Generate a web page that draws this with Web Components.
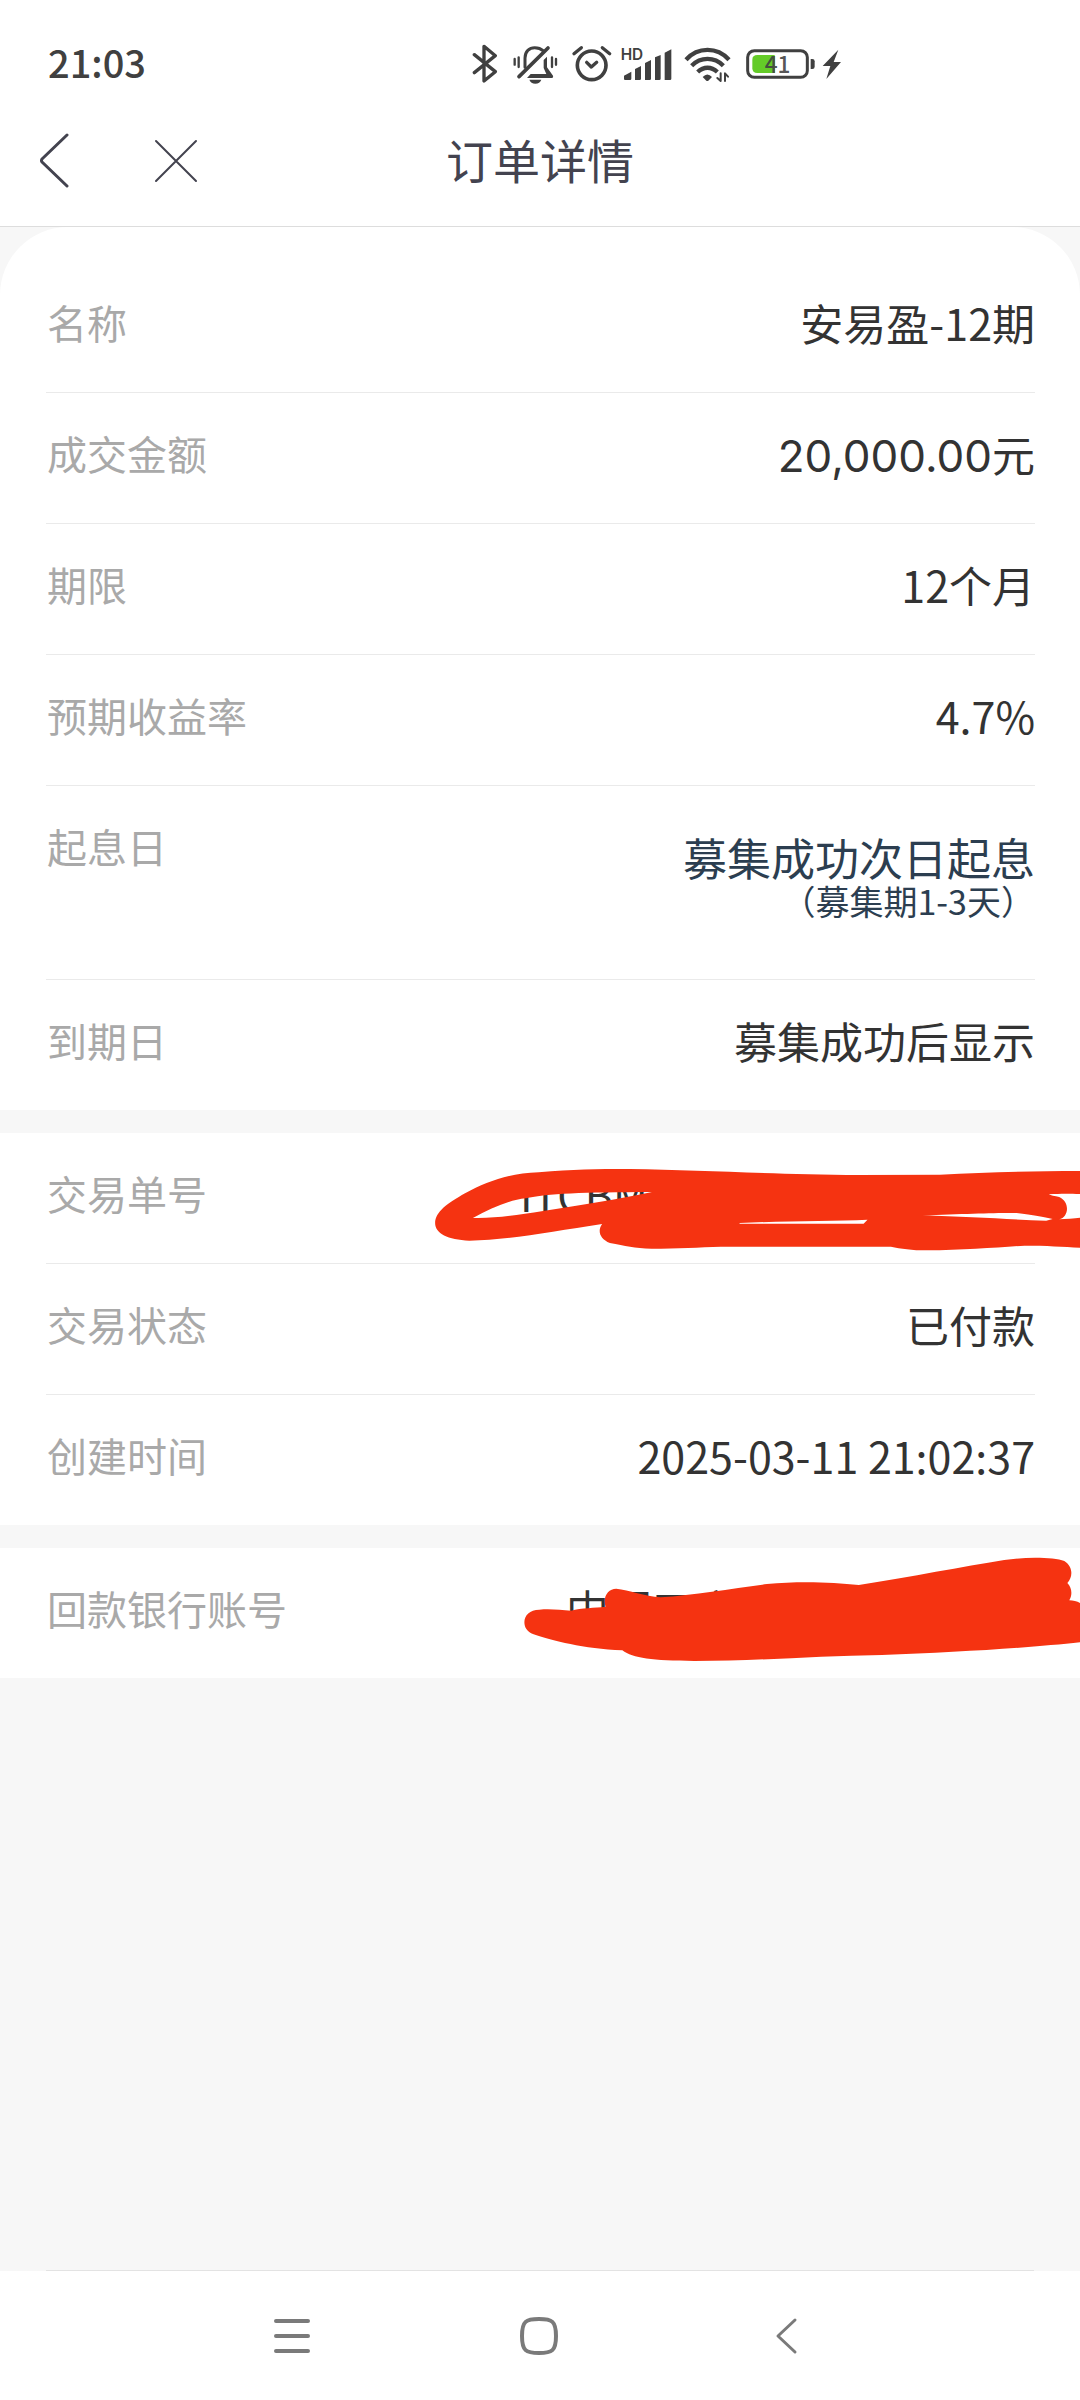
<!DOCTYPE html>
<html lang="zh-CN">
<head>
<meta charset="utf-8">
<meta name="viewport" content="width=device-width, initial-scale=1">
<title>订单详情</title>
<style>
body { margin: 0; font-family: "Noto Sans CJK SC", sans-serif; color: #333; background: #f7f7f7; }
</style>
</head>
<body>
<order-page>
  <status-bar slot="top">21:03</status-bar>
  <app-bar slot="top">订单详情</app-bar>

  <detail-card rounded>
    <detail-row label="名称">安易盈-12期</detail-row>
    <detail-row label="成交金额"><money-value>20,000.00</money-value>元</detail-row>
    <detail-row label="期限">12个月</detail-row>
    <detail-row label="预期收益率">4.7%</detail-row>
    <detail-row label="起息日"><value-note>募集成功次日起息<span slot="note">（募集期1-3天）</span></value-note></detail-row>
    <detail-row label="到期日" last>募集成功后显示</detail-row>
  </detail-card>

  <detail-card>
    <detail-row label="交易单号"><masked-value kind="order">ITCBM</masked-value></detail-row>
    <detail-row label="交易状态">已付款</detail-row>
    <detail-row label="创建时间" last>2025-03-11 21:02:37</detail-row>
  </detail-card>

  <detail-card>
    <detail-row label="回款银行账号" last><masked-value kind="bank">中国工商</masked-value></detail-row>
  </detail-card>

  <nav-bar slot="bottom"></nav-bar>
</order-page>

<script>
const define = (name, html, setup) => {
  const template = document.createElement('template');
  template.innerHTML = html;
  customElements.define(name, class extends HTMLElement {
    constructor() {
      super();
      this.attachShadow({ mode: 'open' }).append(template.content.cloneNode(true));
    }
    connectedCallback() { if (setup) setup(this, this.shadowRoot); }
  });
};

define('order-page', `
<style>
  :host { display: flex; flex-direction: column; min-height: 100vh; background: #f7f7f7; }
  main { flex: 1; display: flex; flex-direction: column; gap: 23px; }
</style>
<slot name="top"></slot>
<main><slot></slot></main>
<slot name="bottom"></slot>`);

define('status-bar', `
<style>
  :host { display: flex; align-items: flex-start; justify-content: space-between; box-sizing: border-box;
    height: 96px; padding: 32px 239px 0 48px; background: #fff; color: #404040;
    font-size: 38px; line-height: 60px; font-weight: 500; }
  .icons { display: flex; }
  svg { display: block; height: 64px; fill: none; stroke: #404040; stroke-linecap: round; stroke-linejoin: round; }
  .solid { fill: #404040; stroke: none; }
  text { fill: #404040; stroke: none; font-family: Inter, sans-serif; }
  .bt { margin-right: 14px; } .bell { margin-right: 12px; } .alarm { margin-right: 8px; }
  .signal { margin-right: 12px; } .wifi { margin-right: 15px; } .battery { margin-right: 7px; }
</style>
<time><slot></slot></time>
<div class="icons">
  <svg class="bt" width="26" viewBox="36 6 78 192" stroke-width="10"><path d="M43 74 L106 125 L72 153 V49 L106 77 L43 128"/></svg>
  <svg class="bell" width="47" viewBox="155 6 141 192" stroke-width="9">
    <path d="M163 87V104M175 82V111M275 82V111M287 87V104" stroke-width="7"/>
    <path d="M194 112V84C194 64 207 53 223 53C234 53 242 56 248 62"/>
    <path d="M263 54 L176 140" stroke-width="11"/>
    <path class="solid" d="M250 90 L260 80V112L278 137Q280 144 272 144H200L211 132H258L250 114ZM207 149H243C240 157 234 161 225 161C216 161 210 157 207 149Z"/>
  </svg>
  <svg class="alarm" width="42" viewBox="332 6 126 192" stroke-width="11">
    <circle cx="394" cy="106" r="43"/><path d="M379 97 L393 111 L409 97M341 71 L363 53M426 53 L448 71" stroke-width="10"/>
  </svg>
  <svg class="signal" width="51" viewBox="484 6 153 192">
    <text x="483" y="89" font-size="46" font-weight="600">HD</text>
    <path class="solid" d="M496 150Q493 150 493 146V137L515 125V146Q515 150 511 150ZM526 117L544 108V146Q544 150 540 150H526ZM556 99L574 90V146Q574 150 570 150H556ZM586 82L603 75V146Q603 150 599 150H586ZM615 68L635 58V146Q635 150 631 150H615Z"/>
  </svg>
  <svg class="wifi" width="47" viewBox="133 6 141 192" stroke-width="13">
    <path d="M139 89C175 50 232 50 268 89M156 107C183 80 224 80 251 107M174 126C192 109 215 109 233 126" stroke-linecap="butt"/>
    <path class="solid" d="M189 141Q203 126 217 141L206 152Q203 154 200 152Z"/>
    <path d="M243 130V153L233 144M256 153V130L265 140" stroke-width="6"/>
  </svg>
  <svg class="battery" width="69" viewBox="318 6 207 192" stroke-width="9">
    <rect x="323" y="62" width="179" height="80" rx="20"/>
    <path class="solid" d="M512 87H517Q524 87 524 94V110Q524 117 517 117H512Z"/>
    <path d="M352 75H404V129H352Q337 129 337 115V89Q337 75 352 75Z" style="fill:#64cb28;stroke:none"/>
    <text x="374" y="129" font-size="68" style="font-family:'Noto Sans CJK SC',sans-serif;fill-opacity:.9">41</text>
  </svg>
  <svg width="19" viewBox="545 6 57 192"><path class="solid" d="M594 59 L547 108H570L558 147L602 96H580Z"/></svg>
</div>`);

define('app-bar', `
<style>
  :host { display: grid; grid-template-columns: 1fr auto 1fr; align-items: center; height: 130px;
    background: #fff; border-bottom: 1px solid #ddd; color: #43434f; }
  .actions { display: flex; align-items: center; gap: 48px; padding-left: 24px; }
  button { display: grid; place-items: center; width: 60px; height: 80px; padding: 0; border: 0; background: none; color: inherit; }
  button + button { width: 88px; }
  svg { display: block; fill: none; stroke: currentColor; stroke-linecap: round; stroke-linejoin: round; }
  h1 { margin: 0; padding-bottom: 4px; font-size: 47px; line-height: 64px; font-weight: 400; }
</style>
<div class="actions">
  <button type="button" aria-label="返回"><svg width="30" height="56" viewBox="0 0 30 56" stroke-width="3"><path d="M28 2 L3 26Q2 28 3 29L28 53"/></svg></button>
  <button type="button" aria-label="关闭"><svg width="44" height="44" viewBox="0 0 44 44" stroke-width="2"><path d="M2 2 L42 42M42 2 L2 42"/></svg></button>
</div>
<h1><slot></slot></h1>`);

define('detail-card', `
<style>
  :host { display: block; background: #fff; }
  :host([rounded]) { padding-top: 35px; border-radius: 68px 68px 0 0; }
</style>
<slot></slot>`);

define('detail-row', `
<style>
  :host { display: block; position: relative; }
  .row { display: flex; justify-content: space-between; align-items: flex-start; margin: 0 45px 0 46px;
    padding: 30px 0 40px; border-bottom: 1px solid #eaeaea; line-height: 60px; }
  :host([last]) .row { border-bottom: 0; }
  .label { padding-left: 1px; font-size: 40px; color: #a9a9a9; }
  .value { font-size: 43px; text-align: right; }
</style>
<div class="row"><span class="label"></span><span class="value"><slot></slot></span></div>`,
(host, root) => { root.querySelector('.label').textContent = host.getAttribute('label'); });

define('money-value', `
<style>:host { font-family: Inter, sans-serif; font-size: 44px; line-height: 1; }</style><slot></slot>`);

define('value-note', `
<style>
  :host { display: flex; flex-direction: column; padding: 20px 0 17px; color: #2c3e50; font-size: 44px; line-height: 43px; }
  .note { font-size: 34px; }
</style>
<span><slot></slot></span><span class="note"><slot name="note"></slot></span>`);

const strokes = {
  order: {
    width: 680, text: 515, box: '0 -21 1568 393',
    d: `M81 250C81 215 110 190 150 160C200 125 250 100 320 97C400 88 450 87 530 87C700 90 850 103 1060 105L1245 104C1350 98 1450 93 1568 93V162C1540 161 1520 161 1496 163C1500 167 1510 168 1520 171C1545 185 1543 230 1520 238C1535 237 1555 235 1568 233V323C1530 320 1490 317 1440 317C1380 322 1300 331 1215 331C1180 331 1155 326 1132 320H740C690 322 640 326 580 326C540 325 520 318 484 309C460 296 455 272 466 252C350 275 250 300 160 302C110 300 81 280 81 250Z
        M168 234C210 205 250 180 290 175C340 160 420 157 581 156C500 178 420 195 330 213C270 225 220 236 168 234Z
        M783 249C880 243 1000 243 1078 239L1069 251H783Z
        M1205 226C1300 222 1380 218 1422 219C1460 224 1485 232 1505 237L1490 242C1400 238 1310 230 1205 226Z`
  },
  bank: {
    width: 600, text: 469, box: '0 54 1568 390',
    d: `M116 277C116 255 130 240 155 239C185 236 210 240 238 242C265 232 300 235 328 230C320 200 335 176 356 176C390 181 430 198 472 202C560 195 660 175 750 162C830 153 920 156 990 165C1130 140 1260 110 1370 90C1430 80 1500 82 1527 93C1550 110 1550 140 1535 159C1548 175 1548 195 1540 211C1550 212 1560 214 1568 219V337C1450 352 1250 367 1050 375C880 378 720 393 560 393C450 392 400 385 372 361C270 357 190 332 140 313C122 305 116 292 116 277Z`
  }
};

/* A value covered by a hand-drawn marker stroke that runs to the right edge of its row. */
define('masked-value', `
<style>
  :host { display: block; text-align: left; }
  svg { position: absolute; right: 0; top: 0; height: 100%; }
  path { fill: #f53311; fill-rule: evenodd; }
</style>
<slot></slot><svg preserveAspectRatio="none" aria-hidden="true"><path/></svg>`,
(host, root) => {
  const s = strokes[host.getAttribute('kind')];
  const svg = root.querySelector('svg');
  host.style.width = s.text + 'px';
  svg.setAttribute('viewBox', s.box);
  svg.setAttribute('width', s.width);
  svg.firstElementChild.setAttribute('d', s.d);
});

define('nav-bar', `
<style>
  :host { display: block; background: linear-gradient(#f7f7f7 1px, #fff 1px); }
  nav { display: flex; justify-content: center; align-items: center; gap: 167px; height: 129px;
    margin: 0 46px; padding-right: 2px; border-top: 1px solid #e3e3e3; }
  button { display: grid; place-items: center; width: 80px; height: 80px; padding: 0; border: 0; background: none; }
  svg { display: block; fill: none; stroke: #7a7a7a; stroke-width: 4; stroke-linecap: round; stroke-linejoin: round; }
</style>
<nav>
  <button type="button" aria-label="最近任务"><svg width="40" height="40" viewBox="0 0 40 40"><path d="M4 5H36M4 20H36M4 35H36"/></svg></button>
  <button type="button" aria-label="主屏幕"><svg width="40" height="40" viewBox="0 0 40 40"><path d="M20 3C33 3 37 5 37 20S33 37 20 37S3 35 3 20S7 3 20 3Z"/></svg></button>
  <button type="button" aria-label="返回"><svg width="40" height="40" viewBox="0 0 40 40"><path d="M29 4 L12 20L29 36" stroke-width="3"/></svg></button>
</nav>`);
</script>
</body>
</html>
